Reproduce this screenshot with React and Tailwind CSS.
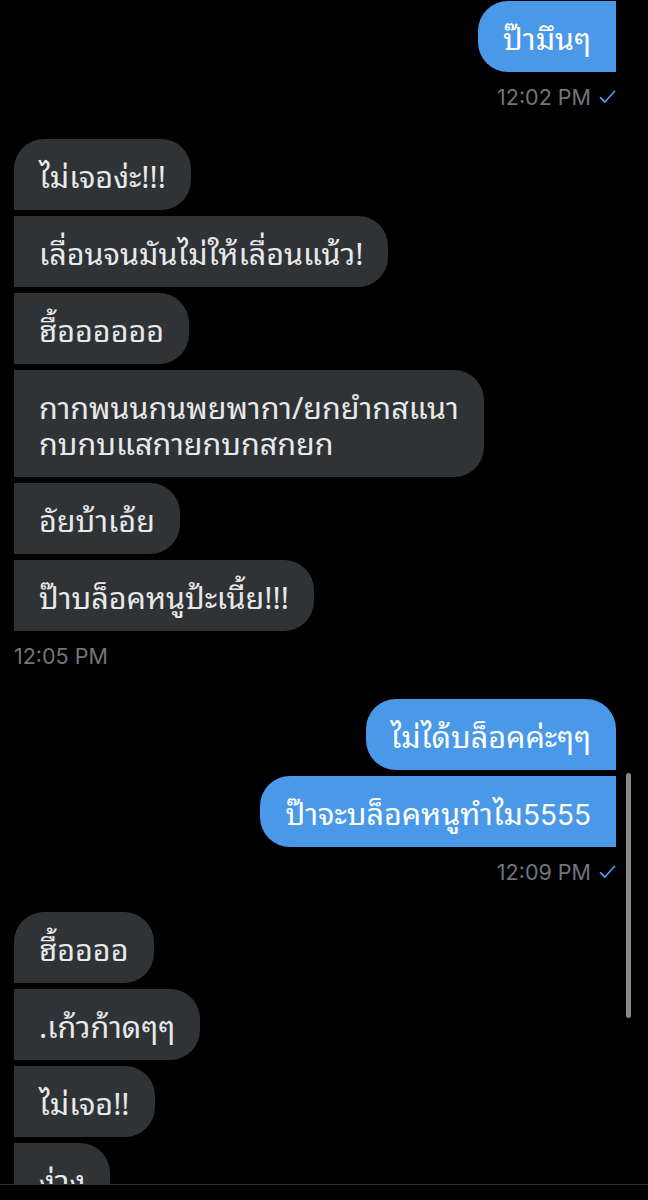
import React from 'react';

function Check() {
  return (
    <svg width="17" height="14" viewBox="0 0 17 14" className="ml-[8px]">
      <path d="M1.5 7.6 L5.8 12 L15.5 1.5" fill="none" stroke="#4a99e9" strokeWidth="1.8" strokeLinecap="round" strokeLinejoin="round" />
    </svg>
  );
}

function Bubble({ children, side, corners }) {
  const color = side === 'out' ? 'bg-[#4a99e9] text-white' : 'bg-[#303336] text-[#e7e9ea]';
  return (
    <div
      className={`${color} ${corners} px-[25px] py-[17.5px] text-[30.5px] leading-[36px] max-w-[490px] font-['Noto_Sans_Thai_Looped','Inter',sans-serif]`}
    >
      {children}
    </div>
  );
}

function Stamp({ time, side }) {
  return (
    <div
      className={`mt-[13px] flex items-center text-[21.5px] leading-[24px] text-[#6e767d] font-['Inter',sans-serif] ${
        side === 'out' ? 'justify-end' : 'justify-start'
      }`}
    >
      <span>{time}</span>
      {side === 'out' && <Check />}
    </div>
  );
}

function Group({ side, items, time, first = true, className = '' }) {
  return (
    <div className={`flex flex-col ${side === 'out' ? 'items-end' : 'items-start'} ${className}`}>
      <div className={`flex flex-col gap-[6px] ${side === 'out' ? 'items-end' : 'items-start'}`}>
        {items.map((t, i) => {
          let corners;
          if (side === 'out') {
            corners = i === 0 && first ? 'rounded-l-[30px] rounded-tr-[30px]' : 'rounded-l-[30px]';
          } else {
            corners = i === 0 ? 'rounded-r-[30px] rounded-tl-[30px]' : 'rounded-r-[30px]';
          }
          return (
            <Bubble key={i} side={side} corners={corners}>
              {t}
            </Bubble>
          );
        })}
      </div>
      {time && <Stamp time={time} side={side} />}
    </div>
  );
}

export default function App() {
  return (
    <div className="relative h-[1200px] w-[648px] bg-black flex flex-col overflow-hidden">
      <div className="flex-1 overflow-hidden pt-[1px] pl-[14px] pr-[32px]">
        <Group side="out" first={false} items={['ป๊ามึนๆ']} time="12:02 PM" />
        <Group
          side="in"
          className="mt-[30px]"
          items={[
            'ไม่เจอง่ะ!!!',
            'เลื่อนจนมันไม่ให้เลื่อนแน้ว!',
            'ฮื้ออออออ',
            <>
              กากพนนกนพยพากา/ยกยำกสแนา
              <br />
              กบกบแสกายกบกสกยก
            </>,
            'อัยบ้าเอ้ย',
            'ป๊าบล็อคหนูป้ะเนี้ย!!!',
          ]}
          time="12:05 PM"
        />
        <Group
          side="out"
          className="mt-[31px]"
          items={[
            'ไม่ได้บล็อคค่ะๆๆ',
            <>
              ป๊าจะบล็อคหนูทำไม<span className="text-[28px] leading-none font-['Inter',sans-serif]">5555</span>
            </>,
          ]}
          time="12:09 PM"
        />
        <Group
          side="in"
          className="mt-[28px]"
          items={['ฮื้ออออ', '.เก้วก้าดๆๆ', 'ไม่เจอ!!', 'ง่วง']}
        />
      </div>
      <div className="h-[16px] shrink-0 border-t border-[#2f3336] bg-black" />
      <div className="absolute left-[626px] top-[773px] h-[245px] w-[5px] rounded-full bg-[#8a8a8a]" />
    </div>
  );
}
